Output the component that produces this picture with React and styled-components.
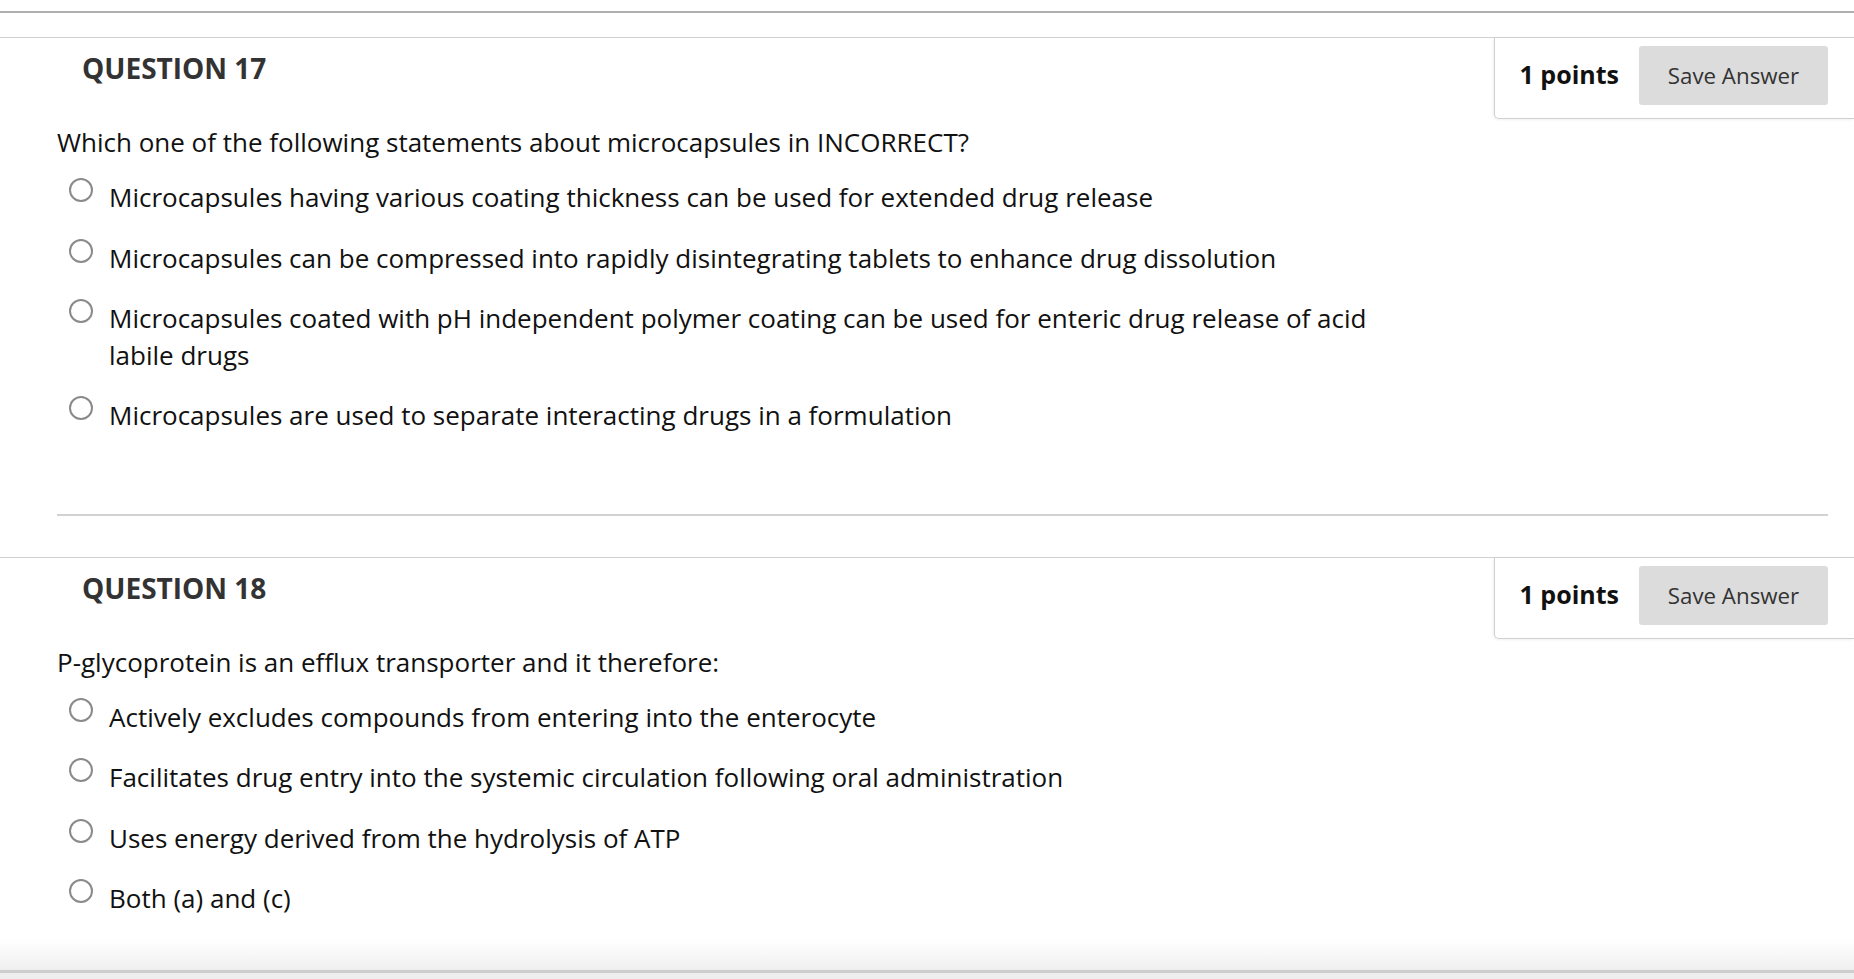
import React from 'react';
import styled, { createGlobalStyle } from 'styled-components';

const GlobalStyle = createGlobalStyle`
  html, body {
    margin: 0;
    padding: 0;
    background: #fff;
  }
  body {
    font-family: 'Open Sans', 'Noto Sans', sans-serif;
    color: #111;
    overflow: hidden;
  }
`;

const QUESTIONS = [
  {
    number: 17,
    points: 1,
    text: 'Which one of the following statements about microcapsules in INCORRECT?',
    options: [
      'Microcapsules having various coating thickness can be used for extended drug release',
      'Microcapsules can be compressed into rapidly disintegrating tablets to enhance drug dissolution',
      'Microcapsules coated with pH independent polymer coating can be used for enteric drug release of acid labile drugs',
      'Microcapsules are used to separate interacting drugs in a formulation',
    ],
  },
  {
    number: 18,
    points: 1,
    text: 'P-glycoprotein is an efflux transporter and it therefore:',
    options: [
      'Actively excludes compounds from entering into the enterocyte',
      'Facilitates drug entry into the systemic circulation following oral administration',
      'Uses energy derived from the hydrolysis of ATP',
      'Both (a) and (c)',
    ],
  },
];

const Page = styled.div`
  padding-top: 11px;
  height: 979px;
  box-sizing: border-box;
  display: flex;
  flex-direction: column;
`;

const TopRule = styled.div`
  border-top: 2px solid #aeaeae;
  height: 24px;
`;

const Question = styled.section`
  border-top: 1px solid #cfcfcf;
  margin-bottom: ${props => (props.last ? '0' : '41px')};
`;

const Header = styled.div`
  display: flex;
  justify-content: space-between;
  align-items: flex-start;
`;

const Heading = styled.h2`
  margin: 0;
  padding: 13px 0 0 82px;
  font-size: 28px;
  line-height: 34px;
  font-weight: 700;
  color: #333;
`;

const PointsBox = styled.div`
  display: flex;
  align-items: center;
  gap: 20px;
  padding: 8px 26px 13px 25px;
  border-left: 1px solid #cfcfcf;
  border-bottom: 1px solid #cfcfcf;
  border-bottom-left-radius: 5px;
  box-shadow: -1px 1px 3px rgba(0, 0, 0, 0.06);
`;

const Points = styled.span`
  font-size: 25px;
  font-weight: 700;
  color: #111;
  padding-bottom: 3px;
`;

const SaveButton = styled.button`
  width: 189px;
  height: 59px;
  border: none;
  border-radius: 3px;
  background: #dcdcdc;
  font-family: 'Open Sans', sans-serif;
  font-size: 22.3px;
  color: #333;
  cursor: pointer;
`;

const Body = styled.div`
  padding: 0 26px 0 57px;
`;

const Prompt = styled.p`
  margin: 5px 0 19px;
  font-size: 26px;
  line-height: 36px;
`;

const Options = styled.ul`
  list-style: none;
  margin: 0;
  padding: 0 0 0 12px;
  display: flex;
  flex-direction: column;
  gap: 24px;
`;

const Option = styled.li`
  display: flex;
  align-items: flex-start;
  gap: 16px;
  font-size: 26px;
  line-height: 36.5px;
  max-width: 1310px;
`;

const Radio = styled.span`
  flex: none;
  width: 24px;
  height: 24px;
  margin-top: -1px;
  box-sizing: border-box;
  border: 2px solid #8a8a8a;
  border-radius: 50%;
  background: #fff;
`;

const Separator = styled.hr`
  margin: 80px 0 0;
  border: none;
  border-top: 2px solid #d2d2d2;
`;

const Spacer = styled.div`
  flex: 1;
`;

const Footer = styled.div`
  flex: none;
  height: 30px;
  background: linear-gradient(to bottom, rgba(255, 255, 255, 0), #efefef);
  border-bottom: 3px solid #cdcdcd;
`;

const FooterBar = styled.div`
  flex: none;
  height: 6px;
  background: #eeeeee;
`;

const QuestionBlock = ({ q, last }) => (
  <Question last={last}>
    <Header>
      <Heading>QUESTION {q.number}</Heading>
      <PointsBox>
        <Points>{q.points} points</Points>
        <SaveButton>Save Answer</SaveButton>
      </PointsBox>
    </Header>
    <Body>
      <Prompt>{q.text}</Prompt>
      <Options>
        {q.options.map((opt, i) => (
          <Option key={i}>
            <Radio />
            <span>{opt}</span>
          </Option>
        ))}
      </Options>
      {!last && <Separator />}
    </Body>
  </Question>
);

export default function App() {
  return (
    <>
      <GlobalStyle />
      <Page>
        <TopRule />
        {QUESTIONS.map((q, i) => (
          <QuestionBlock key={q.number} q={q} last={i === QUESTIONS.length - 1} />
        ))}
        <Spacer />
        <Footer />
        <FooterBar />
      </Page>
    </>
  );
}
